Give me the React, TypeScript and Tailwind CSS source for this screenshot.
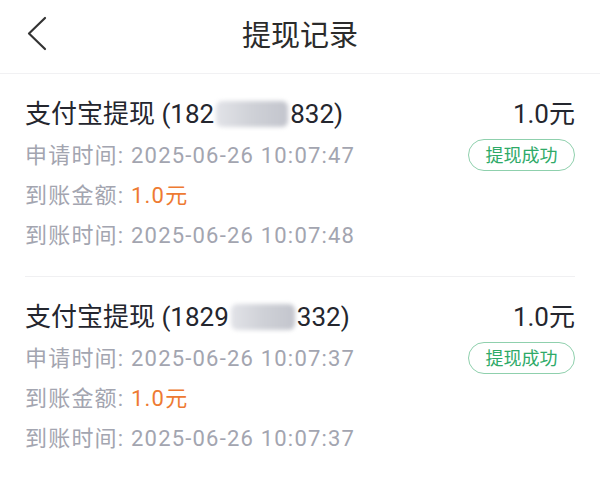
const records = [
  { head: '182', tail: '832)', blurW: 'w-[72px]', apply: '2025-06-26 10:07:47', arrive: '2025-06-26 10:07:48' },
  { head: '1829', tail: '332)', blurW: 'w-[64px]', apply: '2025-06-26 10:07:37', arrive: '2025-06-26 10:07:37' },
];

const font = "font-['Roboto','Noto_Sans_CJK_SC',sans-serif]";

const App = () => {
  return (
    <div className={`w-[600px] h-[478px] bg-white overflow-hidden ${font}`}>
      {/* header */}
      <div className="relative h-[74px] flex items-center justify-center border-b border-[#f1f1f3]">
        <svg className="absolute left-[24px] top-[14px]" width="28" height="40" viewBox="0 0 28 40" fill="none">
          <polyline points="21,4 5,19.5 21,35" stroke="#333" strokeWidth="2.2" strokeLinecap="round" strokeLinejoin="round" />
        </svg>
        <h1 className="text-[29px] text-[#2b2b2b]">提现记录</h1>
      </div>

      {records.map((r, i) => (
        <div key={i} className="px-[25px]">
          <div className={`flex justify-between pt-[20px] pb-[20px] ${i === 0 ? 'border-b border-[#f0f0f2]' : ''}`}>
            <div className="text-[22px] tracking-[1.2px] text-[#a3a5b0] leading-[40px]">
              <div className="text-[26px] tracking-normal text-[#24262e] leading-[40px] flex items-center">
                <span>支付宝提现 ({r.head}</span>
                <span className={`inline-block ${r.blurW} h-[26px] mx-[2px] rounded-[6px] bg-gradient-to-r from-[#e2e3e8] via-[#cfd1d7] to-[#c3c5cd] blur-[2px]`}></span>
                <span>{r.tail}</span>
              </div>
              <div className="mt-[2px]">申请时间: {r.apply}</div>
              <div>
                到账金额: <span className="text-[#ee7a32]">1.0元</span>
              </div>
              <div>到账时间: {r.arrive}</div>
            </div>
            <div className="flex flex-col items-end">
              <div className="text-[26px] text-[#24262e] leading-[40px]">1.0元</div>
              <div className="mt-[5px] h-[32px] w-[107px] rounded-full border border-[#8fd0ad] text-[#2eaa68] text-[18px] flex items-center justify-center">
                提现成功
              </div>
            </div>
          </div>
        </div>
      ))}
    </div>
  );
};

export default App;
